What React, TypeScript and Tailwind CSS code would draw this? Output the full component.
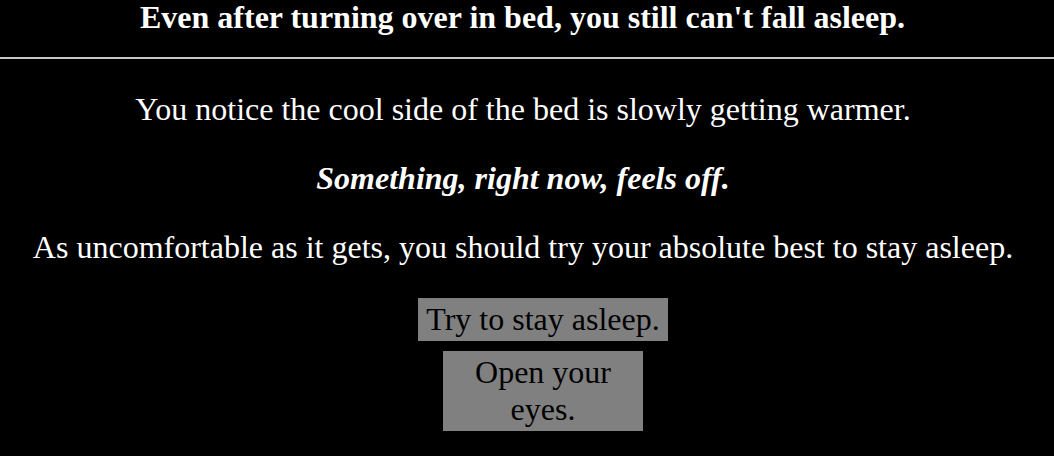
export default function App() {
  return (
    <main className="min-h-[456px] w-full bg-black text-white font-['Liberation_Serif',serif] text-center text-[32px]">
      <header>
        <h1 className="font-bold leading-[34px] pr-[9px]">
          Even after turning over in bed, you still can't fall asleep.
        </h1>
        <hr className="mt-[23px] border-t-2 border-[#c8c8c8]" />
      </header>

      <section className="flex flex-col items-center pt-[32px] leading-[37px] pr-[8px]">
        <p>You notice the cool side of the bed is slowly getting warmer.</p>
        <p className="mt-[32px] font-bold italic">Something, right now, feels off.</p>
        <p className="mt-[32px]">
          As uncomfortable as it gets, you should try your absolute best to stay asleep.
        </p>

        <div className="mt-[32px] flex flex-col items-center gap-[10px] pl-[40px]">
          <button type="button" className="w-[250px] bg-[#808080] text-black py-[3px]">
            Try to stay asleep.
          </button>
          <button type="button" className="w-[200px] bg-[#808080] text-black py-[3px]">
            Open your eyes.
          </button>
        </div>
      </section>
    </main>
  )
}
